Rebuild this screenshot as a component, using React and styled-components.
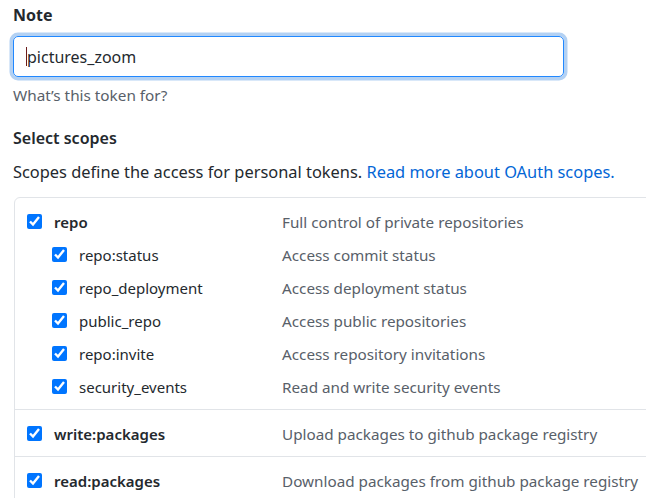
import React from 'react';
import styled, { createGlobalStyle } from 'styled-components';

const GlobalStyle = createGlobalStyle`
  html, body {
    margin: 0;
    padding: 0;
    background: #fff;
    overflow: hidden;
  }
  body {
    font-family: "Noto Sans", "Open Sans", sans-serif;
    color: #24292e;
  }
`;

const Page = styled.div`
  padding: 4px 0 0 13px;
  width: 720px;
`;

const FieldLabel = styled.div`
  font-size: 16px;
  font-weight: 700;
  line-height: 22px;
  height: 22px;
`;

const InputBox = styled.div`
  margin-top: 10px;
  width: 551px;
  height: 41px;
  box-sizing: border-box;
  border: 1px solid #2188ff;
  border-radius: 5px;
  box-shadow: 0 0 0 3.5px rgba(3, 102, 214, 0.3);
  display: flex;
  align-items: center;
  padding-left: 12px;
  font-size: 16px;
  color: #24292e;
`;

const Caret = styled.span`
  display: inline-block;
  width: 1px;
  height: 19px;
  background: #6a1b1b;
`;

const Hint = styled.p`
  margin: 8px 0 0;
  font-size: 15.3px;
  line-height: 20px;
  color: #586069;
`;

const SectionTitle = styled.h3`
  margin: 21px 0 0;
  font-size: 16px;
  font-weight: 600;
  line-height: 24px;
`;

const Lead = styled.p`
  margin: 10px 0 0;
  font-size: 16.4px;
  line-height: 24px;
`;

const Link = styled.a`
  color: #0366d6;
  text-decoration: none;
`;

const ScopeTable = styled.div`
  margin-top: 13px;
  margin-left: 1px;
  border: 1px solid #e1e4e8;
  border-radius: 6px;
`;

const Group = styled.div`
  padding: 7px 0 6px;
  & + & {
    border-top: 1px solid #e1e4e8;
  }
`;

const Row = styled.div`
  display: flex;
  align-items: center;
  height: 33px;
  font-size: 15px;
`;

const LabelCell = styled.label`
  width: 267px;
  box-sizing: border-box;
  padding-left: ${(p) => (p.$child ? 37 : 12)}px;
  display: flex;
  align-items: center;
  gap: 12px;
  font-weight: ${(p) => (p.$child ? 400 : 600)};
  color: #24292e;
`;

const Check = styled.input`
  width: 15px;
  height: 15px;
  margin: 0;
  accent-color: #0075ff;
`;

const Desc = styled.span`
  font-size: 15.25px;
  color: #586069;
`;

const groups = [
  {
    name: 'repo',
    desc: 'Full control of private repositories',
    children: [
      ['repo:status', 'Access commit status'],
      ['repo_deployment', 'Access deployment status'],
      ['public_repo', 'Access public repositories'],
      ['repo:invite', 'Access repository invitations'],
      ['security_events', 'Read and write security events'],
    ],
  },
  { name: 'write:packages', desc: 'Upload packages to github package registry', children: [] },
  { name: 'read:packages', desc: 'Download packages from github package registry', children: [] },
];

const ScopeRow = ({ name, desc, child }) => (
  <Row>
    <LabelCell $child={child}>
      <Check type="checkbox" checked readOnly />
      {name}
    </LabelCell>
    <Desc>{desc}</Desc>
  </Row>
);

export default function App() {
  return (
    <Page>
      <GlobalStyle />
      <FieldLabel>Note</FieldLabel>
      <InputBox>
        <Caret />
        pictures_zoom
      </InputBox>
      <Hint>What’s this token for?</Hint>

      <SectionTitle>Select scopes</SectionTitle>
      <Lead>
        Scopes define the access for personal tokens. <Link href="#">Read more about OAuth scopes.</Link>
      </Lead>

      <ScopeTable>
        {groups.map((g) => (
          <Group key={g.name}>
            <ScopeRow name={g.name} desc={g.desc} />
            {g.children.map(([n, d]) => (
              <ScopeRow key={n} name={n} desc={d} child />
            ))}
          </Group>
        ))}
      </ScopeTable>
    </Page>
  );
}
